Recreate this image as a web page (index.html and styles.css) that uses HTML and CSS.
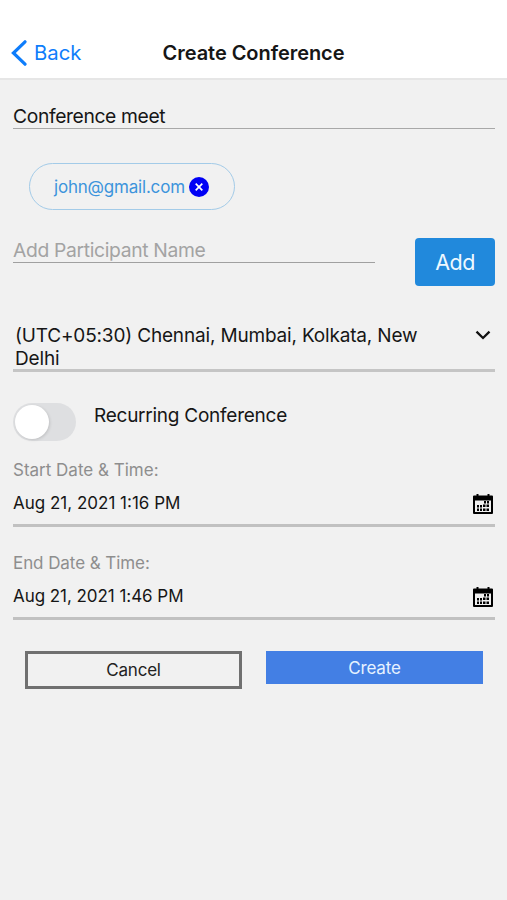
FILE: index.html
```html
<!DOCTYPE html>
<html lang="en">
<head>
<meta charset="utf-8">
<title>Create Conference</title>
<link rel="stylesheet" href="styles.css">
</head>
<body>
<header class="bar">
  <a class="back"><svg class="back-icon" width="16" height="26" viewBox="0 0 16 26"><path d="M14 1.800 2.400 13 14 24.200"/></svg><span>Back</span></a>
  <h1 class="title">Create Conference</h1>
</header>
<main class="form">
  <div class="name-field">Conference meet</div>
  <div class="chip">
    <span>john@gmail.com</span>
    <svg width="20" height="20" viewBox="0 0 20 20"><circle cx="10" cy="10" r="10" fill="#0000f5"/><path d="M6.700 6.700l6.600 6.600M13.300 6.700l-6.600 6.600" stroke="#fff" stroke-width="1.700"/></svg>
  </div>
  <div class="add-row">
    <div class="participant">Add Participant Name</div>
    <button class="add">Add</button>
  </div>
  <div class="zone">
    <div class="zone-text">(UTC+05:30) Chennai, Mumbai, Kolkata, New<br>Delhi</div>
    <svg class="chevron" width="16" height="10" viewBox="0 0 16 10"><path d="M1.500 1.700 8 8l6.500-6.300"/></svg>
  </div>
  <div class="recurring">
    <div class="toggle"><div class="knob"></div></div>
    <span class="recurring-label">Recurring Conference</span>
  </div>
  <section class="date">
    <div class="date-label">Start Date &amp; Time:</div>
    <div class="date-row">
      <span>Aug 21, 2021 1:16 PM</span>
      <svg class="calendar" width="20" height="20" viewBox="0 0 20 20"><path d="M3.500 0h2v1.500h9V0h2v1.500H19q1 0 1 1V19q0 1-1 1H1q-1 0-1-1V2.500q0-1 1-1h2.500z"/><path fill="#f1f1f1" d="M2 6.500h16v11.500H2z"/><path d="M11 7h2v2.500h-2zM14 7h2v2.500h-2zM4 11h2v2.500H4zM7 11h2v2.500H7zM10 10.500h2.500v2.500H10zM13.500 10.500H16v2.500h-2.500zM4 14.500h2V17H4zM7 14.500h2V17H7zM10 14.500h2.500V17H10zM13.500 14.500H16V17h-2.500z"/></svg>
    </div>
  </section>
  <section class="date">
    <div class="date-label end-label">End Date &amp; Time:</div>
    <div class="date-row end-value">
      <span>Aug 21, 2021 1:46 PM</span>
      <svg class="calendar" width="20" height="20" viewBox="0 0 20 20"><path d="M3.500 0h2v1.500h9V0h2v1.500H19q1 0 1 1V19q0 1-1 1H1q-1 0-1-1V2.500q0-1 1-1h2.500z"/><path fill="#f1f1f1" d="M2 6.500h16v11.500H2z"/><path d="M11 7h2v2.500h-2zM14 7h2v2.500h-2zM4 11h2v2.500H4zM7 11h2v2.500H7zM10 10.500h2.500v2.500H10zM13.500 10.500H16v2.500h-2.500zM4 14.500h2V17H4zM7 14.500h2V17H7zM10 14.500h2.500V17H10zM13.500 14.500H16V17h-2.500z"/></svg>
    </div>
  </section>
  <div class="actions">
    <button class="cancel">Cancel</button>
    <button class="create">Create</button>
  </div>
</main>
</body>
</html>
```
FILE: styles.css
```css
* { box-sizing: border-box; }
body {
  margin: 0;
  min-height: 900px;
  background: #f1f1f1;
  color: #161616;
  font-family: Inter, "Liberation Sans", sans-serif;
}
button { font-family: inherit; padding: 0; border: 0; border-radius: 0; }
svg { display: block; flex: none; }
.bar {
  height: 80px;
  padding: 27px 11px 0;
  display: grid;
  grid-template-columns: 1fr auto 1fr;
  align-items: center;
  background: #fff;
  border-bottom: 2px solid #e6e6e6;
}
.back { display: flex; align-items: center; gap: 7px; color: #0e7dfb; font-size: 20.300px; }
.back-icon path { fill: none; stroke: #0e7dfb; stroke-width: 3.200; stroke-linecap: round; }
.title { margin: 0; font-size: 20px; font-weight: 600; letter-spacing: -0.050px; }
.form { padding: 24px 12px 0 13px; }
.name-field {
  height: 25px;
  line-height: 24px;
  font-size: 19.300px;
  letter-spacing: -0.370px;
  border-bottom: 1px solid #a8a8a8;
}
.chip {
  width: 206px;
  height: 47px;
  margin: 34px 0 0 16px;
  padding-left: 24px;
  display: flex;
  align-items: center;
  gap: 4px;
  border: 1px solid #a3cbe8;
  border-radius: 24px;
  color: #3c94dc;
  font-size: 17px;
  letter-spacing: -0.200px;
}
.add-row { display: flex; justify-content: space-between; margin-top: 28px; }
.participant {
  width: 362px;
  height: 25px;
  line-height: 25px;
  font-size: 19.300px;
  letter-spacing: -0.330px;
  color: #a3a3a3;
  border-bottom: 1px solid #a0a0a0;
}
.add {
  width: 80px;
  height: 48px;
  border-radius: 4px;
  background: #2189dc;
  color: #eef8ff;
  font-size: 21.500px;
  letter-spacing: -0.500px;
}
.zone {
  display: flex;
  justify-content: space-between;
  height: 49px;
  margin-top: 37px;
  padding: 1px 4px 0 2px;
  border-bottom: 3px solid #c5c5c5;
}
.zone-text { font-size: 19px; line-height: 23px; letter-spacing: -0.170px; white-space: nowrap; }
.chevron { margin-top: 6px; }
.chevron path { fill: none; stroke: #111; stroke-width: 2.300; }
.recurring { display: flex; gap: 18px; margin-top: 31px; }
.toggle { width: 63px; height: 38px; padding: 2px; border-radius: 19px; background: #dedfe1; }
.knob { width: 34px; height: 34px; border-radius: 50%; background: #fff; box-shadow: 1px 1px 3px #0002; }
.recurring-label { font-size: 19px; line-height: 26px; letter-spacing: -0.250px; }
.date { height: 93px; padding-top: 18px; }
.date-label { color: #8e8e8e; font-size: 17px; line-height: 22px; }
.end-label { letter-spacing: -0.070px; }
.date-row {
  height: 46px;
  padding: 0 2px 0 0;
  display: flex;
  align-items: center;
  justify-content: space-between;
  font-size: 17px;
  border-bottom: 3px solid #c1c1c1;
}
.end-value { letter-spacing: -0.050px; }
.calendar { margin-top: 2px; }
.actions { display: flex; gap: 24px; padding: 24px 12px 0; align-items: flex-start; }
.cancel { width: 217px; height: 38px; border: 3px solid #707070; background: none; color: #222; font-size: 17px; letter-spacing: -0.200px; }
.create { width: 217px; height: 33px; background: #437fe4; color: #e6f2ff; font-size: 17px; letter-spacing: -0.200px; }
```
